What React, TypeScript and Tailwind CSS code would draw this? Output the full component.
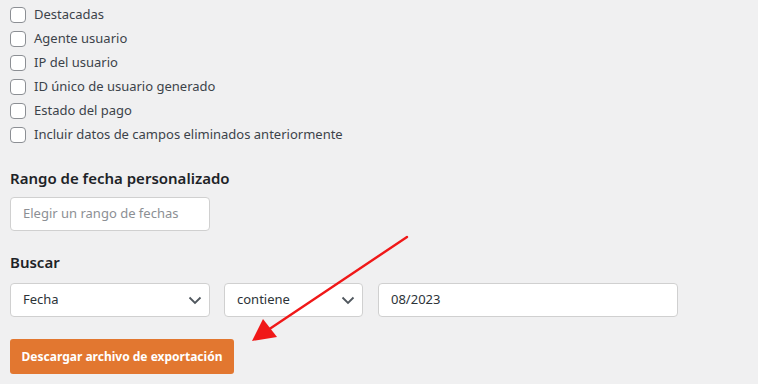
import React from 'react';

const fields = [
  'Destacadas',
  'Agente usuario',
  'IP del usuario',
  'ID único de usuario generado',
  'Estado del pago',
  'Incluir datos de campos eliminados anteriormente',
];

const Chevron = () => (
  <svg width="14" height="9" viewBox="0 0 14 9" className="text-[#50575e]">
    <path d="M1.5 1.5 L7 7 L12.5 1.5" fill="none" stroke="currentColor" strokeWidth="1.8" />
  </svg>
);

export default function App() {
  return (
    <div className="relative w-[758px] h-[384px] overflow-hidden bg-[#f0f0f1] px-[10px] pt-[3px] font-['Noto_Sans',sans-serif] text-[13px] text-[#3c434a]">
      {/* Export fields */}
      <div className="flex flex-col">
        {fields.map((f) => (
          <label key={f} className="flex h-6 items-center gap-2">
            <span className="h-4 w-4 shrink-0 rounded-[4px] border border-[#8c8f94] bg-white" />
            <span className="text-[13px]">{f}</span>
          </label>
        ))}
      </div>

      {/* Date range */}
      <h3 className="mt-[19px] text-[15px] leading-6 font-semibold text-[#1d2327]">Rango de fecha personalizado</h3>
      <div className="mt-[7px] flex h-[34px] w-[200px] items-center rounded-[4px] border border-[#d0d0d0] bg-white px-3 text-[13px] text-[#8c8f94]">
        Elegir un rango de fechas
      </div>

      {/* Search */}
      <h3 className="mt-[19px] text-[15px] leading-6 font-semibold text-[#1d2327]">Buscar</h3>
      <div className="mt-[9px] flex gap-[14px]">
        <div className="flex h-[34px] w-[200px] items-center justify-between rounded-[4px] border border-[#d0d0d0] bg-white pl-3 pr-[7px] text-[#2c3338]">
          <span>Fecha</span>
          <Chevron />
        </div>
        <div className="flex h-[34px] w-[139px] items-center justify-between rounded-[4px] border border-[#d0d0d0] bg-white pl-3 pr-[7px] text-[#2c3338]">
          <span>contiene</span>
          <Chevron />
        </div>
        <div className="ml-px flex h-[34px] w-[300px] items-center rounded-[4px] border border-[#d0d0d0] bg-white px-3 text-[#2c3338]">
          08/2023
        </div>
      </div>

      <button className="mt-[22px] h-[35px] w-[224px] rounded-[3px] bg-[#e27730] text-[12px] font-bold text-white">
        Descargar archivo de exportación
      </button>

      {/* Annotation arrow */}
      <svg className="absolute left-0 top-0" width="758" height="384">
        <line x1="407" y1="237" x2="268" y2="330" stroke="#f01818" strokeWidth="2.4" strokeLinecap="round" />
        <polygon points="252,341 263,319 277,337" fill="#f01818" />
      </svg>
    </div>
  );
}
